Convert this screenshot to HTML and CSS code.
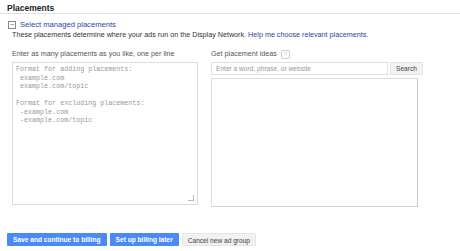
FILE: index.html
```html
<!DOCTYPE html>
<html lang="en">
<head>
    <meta charset="UTF-8">
    <title>Placements</title>
    <link rel="stylesheet" href="styles.css">
</head>
<body>
    <div class="page">
        <h2 class="section-title">Placements</h2>

        <div class="toggle-row">
            <span class="toggle-box">&minus;</span>
            <a class="toggle-link">Select managed placements</a>
        </div>
        <p class="intro">These placements determine where your ads run on the Display Network. <a class="help-link">Help me choose relevant placements.</a></p>

        <div class="columns">
            <div class="col col-left">
                <div class="col-label">Enter as many placements as you like, one per line</div>
                <div class="entry-box">
                    <pre class="entry-hint">Format for adding placements:
 example.com
 example.com/topic

Format for excluding placements:
 -example.com
 -example.com/topic</pre>
                    <span class="grip"></span>
                </div>
            </div>
            <div class="col col-right">
                <div class="col-label">Get placement ideas <span class="help-icon">?</span></div>
                <div class="search-row">
                    <div class="search-input">Enter a word, phrase, or website</div>
                    <button class="search-btn">Search</button>
                </div>
                <div class="results-box"></div>
            </div>
        </div>

        <div class="actions">
            <button class="btn btn-primary">Save and continue to billing</button>
            <button class="btn btn-primary">Set up billing later</button>
            <button class="btn btn-plain">Cancel new ad group</button>
        </div>
    </div>
</body>
</html>
```

FILE: styles.css
```css
:root {
    --text: #333;
    --muted: #999;
    --link: #2a44a0;
    --border: #dcdcdc;
    --blue: #4a8af4;
}

body {
    margin: 0;
    font-family: 'Liberation Sans', Arial, sans-serif;
    color: var(--text);
    background: #fff;
}

.page { width: 460px; height: 251px; overflow: hidden; }

/* --- header --- */
.section-title {
    margin: 0;
    padding: 3px 7px 0;
    height: 10px;
    font-size: 8.5px;
    line-height: 10px;
    font-weight: bold;
    color: #222;
    border-bottom: 1px solid #e2e2e2;
}

.toggle-row { display: flex; align-items: center; gap: 4px; margin: 6px 0 0 8px; height: 9px; }
.toggle-box {
    width: 6px; height: 6px; border: 1px solid #888; font-size: 7px; line-height: 5px;
    text-align: center; color: #555; box-sizing: content-box;
}
.toggle-link { font-size: 7.6px; color: var(--link); }

.intro { margin: 1px 0 0 12px; font-size: 7.2px; line-height: 9px; color: #333; }
.help-link { color: var(--link); }

/* --- columns --- */
.columns { display: flex; gap: 13px; margin: 10px 0 0 12px; }
.col-label { font-size: 7.2px; line-height: 9px; height: 9px; color: #555; margin-bottom: 4px; }
.col-left { width: 186px; }
.col-right { width: 212px; }

.entry-box {
    position: relative;
    height: 143px;
    border: 1px solid #ddd;
    box-sizing: border-box;
    padding: 2px 3px;
}
.entry-hint {
    margin: 0;
    font-family: 'Liberation Mono', 'Courier New', monospace;
    font-size: 6.7px;
    line-height: 8.5px;
    color: #999;
}
.grip {
    position: absolute; right: 3px; bottom: 3px; width: 5px; height: 5px;
    border-right: 1px solid #bbb; border-bottom: 1px solid #bbb;
}

.help-icon {
    display: inline-block; width: 7px; height: 7px; border: 1px solid #ccc; border-radius: 2px;
    font-size: 5.5px; line-height: 7px; text-align: center; color: #bbb; vertical-align: middle;
    margin-left: 2px;
}

.search-row { display: flex; gap: 2px; height: 13px; }
.search-input {
    width: 177px; height: 13px; box-sizing: border-box; border: 1px solid #e0e0e0;
    padding-left: 4px; font-size: 6.6px; line-height: 11px; color: #999;
}
.search-btn {
    width: 33px; height: 13px; padding: 0; border: 1px solid #e4e4e4; border-radius: 1px;
    background: #f2f2f2; font-family: inherit; font-size: 6.6px; color: #444;
}
.results-box {
    width: 207px; height: 129px; margin-top: 3px; box-sizing: border-box;
    border: 1px solid #ddd; border-right-color: #c8c8c8; border-bottom-color: #d2d2d2;
}

/* --- footer buttons --- */
.actions { display: flex; gap: 3px; margin: 26px 0 0 7px; }
.btn {
    height: 13px; padding: 0 6px; border: 0; border-radius: 1px;
    font-family: inherit; font-size: 6.6px; line-height: 13px;
}
.btn-primary { background: var(--blue); color: #fff; font-weight: bold; }
.btn-plain { background: #f1f1f1; color: #444; border: 1px solid #e6e6e6; padding: 0 5px; }
```
